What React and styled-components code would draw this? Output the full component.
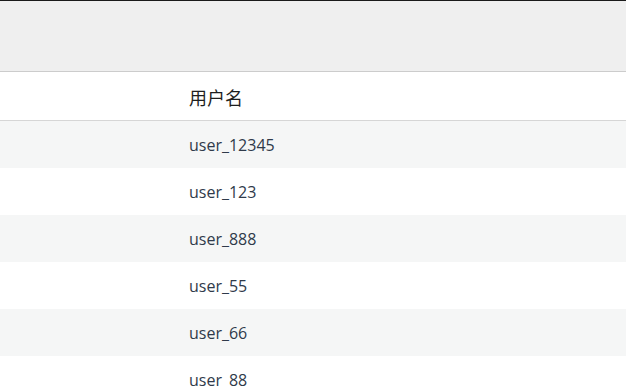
import React from "react";
import styled, { createGlobalStyle } from "styled-components";

const Global = createGlobalStyle`
  html, body { margin: 0; padding: 0; background: #ffffff; }
  body { font-family: "Open Sans", "Noto Sans CJK SC", sans-serif; }
`;

const Page = styled.div`
  width: 626px;
  height: 386px;
  overflow: hidden;
  border-top: 1px solid #1a1a1a;
  box-sizing: border-box;
`;

const TopBar = styled.div`
  height: 70px;
  background: #efefef;
  border-bottom: 1px solid #cccccc;
`;

const Table = styled.div`
  display: flex;
  flex-direction: column;
`;

const Row = styled.div`
  display: grid;
  grid-template-columns: 189px 1fr;
  align-items: center;
  height: ${(p) => (p.$head ? "48px" : "47px")};
  background: ${(p) => (p.$striped ? "#f5f6f6" : "#ffffff")};
  border-bottom: ${(p) => (p.$head ? "1px solid #d6d6d6" : "none")};
`;

const HeadCell = styled.div`
  font-family: "Noto Sans CJK SC", sans-serif;
  font-size: 18px;
  color: #1e1e1e;
  padding-top: 2px;
`;

const Cell = styled.div`
  font-family: "Open Sans", "Noto Sans CJK SC", sans-serif;
  font-size: 16px;
  color: #2f3a4a;
`;

const users = ["user_12345", "user_123", "user_888", "user_55", "user_66", "user_88"];

export default function App() {
  return (
    <Page>
      <Global />
      <TopBar />
      <Table>
        <Row $head>
          <div />
          <HeadCell>用户名</HeadCell>
        </Row>
        {users.map((u, i) => (
          <Row key={u} $striped={i % 2 === 0}>
            <div />
            <Cell>{u}</Cell>
          </Row>
        ))}
      </Table>
    </Page>
  );
}
